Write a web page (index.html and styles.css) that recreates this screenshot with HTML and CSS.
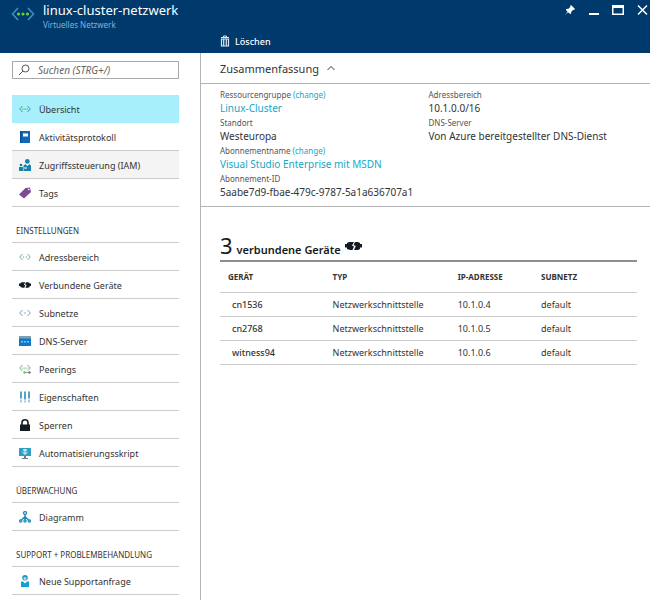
FILE: index.html
```html
<!DOCTYPE html>
<html lang="de">
<head>
  <meta charset="UTF-8">
  <title>linux-cluster-netzwerk - Virtuelles Netzwerk</title>
  <meta name="viewport" content="width=device-width, initial-scale=1.0">
  <link rel="stylesheet" href="styles.css">
</head>
<body>
  <header class="header">
    <div class="title">
      <svg class="title-icon" viewBox="0 0 24 14">
        <path d="M7 1L1.500 7L7 13M17 1L22.500 7L17 13" fill="none" stroke="#3a8fc4" stroke-width="1.600"/>
        <g fill="#6fd02c"><circle cx="7.500" cy="7" r="1.600"/><circle cx="12" cy="7" r="1.600"/><circle cx="16.500" cy="7" r="1.600"/></g>
      </svg>
      <div>
        <h1>linux-cluster-netzwerk</h1>
        <p>Virtuelles Netzwerk</p>
      </div>
    </div>
    <div class="window-buttons">
      <button type="button" aria-label="Anheften"><svg viewBox="0 0 12 12"><path d="M7 1L11 5L10 6L9.300 5.700L7.300 7.700L7 10L5.500 9.500L4 8.200L1 11L3.500 7.700L2 6L2 5L4.500 4.800L6.500 2.800L6 2Z" fill="#fff"/></svg></button>
      <button type="button" aria-label="Minimieren"><svg viewBox="0 0 12 12"><path d="M1 9h10v2H1z" fill="#fff"/></svg></button>
      <button type="button" aria-label="Maximieren"><svg viewBox="0 0 12 12"><path d="M0 1h12v10H0zM1.500 4v5.500h9V4z" fill="#fff" fill-rule="evenodd"/></svg></button>
      <button type="button" aria-label="Schließen"><svg viewBox="0 0 12 12"><path d="M2 1.500L11 10.500M11 1.500L2 10.500" stroke="#fff" stroke-width="1.500"/></svg></button>
    </div>
    <div class="toolbar">
      <button type="button">
        <svg viewBox="0 0 10 12"><path d="M1 2.500h8M3.500 2V1h3v1" fill="none" stroke="#dce9f5"/><path d="M1.500 4h7v7h-7zM3.700 4v7M6.300 4v7" fill="none" stroke="#dce9f5" stroke-width="1.200"/></svg>
        Löschen
      </button>
    </div>
  </header>

  <div class="content">
    <aside class="sidebar">
      <div class="search">
        <svg viewBox="0 0 12 12"><circle cx="7.500" cy="4.500" r="3.500" fill="none" stroke="#555"/><path d="M5 7L1 11" stroke="#555"/></svg>
        <input type="text" placeholder="Suchen (STRG+/)" aria-label="Suchen">
      </div>
      <nav>
        <ul>
          <li><a href="#" class="active">
            <svg viewBox="0 0 12 12"><path d="M3.500 3L.7 6L3.500 9M8.500 3L11.300 6L8.500 9" fill="none" stroke="#2f9fc4"/><path d="M3.200 5.500h1.300v1.200H3.200zM5.400 5.500h1.300v1.200H5.400zM7.500 5.500h1.300v1.200H7.500z" fill="#5fbf2a"/></svg>
            Übersicht</a></li>
          <li><a href="#">
            <svg viewBox="0 0 12 12"><path d="M1 0h10v12H1z" fill="#1068b8"/><path d="M1 0h1.500v12H1z" fill="#0a4f96"/><path d="M4 2.500h5v3H4z" fill="#fff"/></svg>
            Aktivitätsprotokoll</a></li>
          <li><a href="#" class="hovered">
            <svg viewBox="0 0 12 12"><g fill="#1483ad"><circle cx="8.300" cy="2.400" r="2.400"/><path d="M4.500 12V6.500l1.800-1.300L8.300 7l2-1.800L12 6.500V12z"/><circle cx="2" cy="6" r="1.300"/><path d="M0 8h4v4H0z"/></g><path d="M5 8.500h3v1H5z" fill="#fff"/></svg>
            Zugriffssteuerung (IAM)</a></li>
          <li><a href="#">
            <svg viewBox="0 0 12 12"><path d="M6.500 1L11 .5L12 5L5 11.500L0 7.500Z" fill="#804998"/><circle cx="9.800" cy="2.400" r=".8" fill="#fff"/></svg>
            Tags</a></li>
        </ul>
        <h2>EINSTELLUNGEN</h2>
        <ul>
          <li><a href="#">
            <svg viewBox="0 0 12 12"><path d="M3.500 3L.7 6L3.500 9M8.500 3L11.300 6L8.500 9" fill="none" stroke="#6fa8c8"/><path d="M3.800 5.500h1.400v1.200H3.800zM6.800 5.500h1.400v1.200H6.800z" fill="#7cc546"/></svg>
            Adressbereich</a></li>
          <li><a href="#">
            <svg viewBox="0 1 17 10"><use href="#plug"/></svg>
            Verbundene Geräte</a></li>
          <li><a href="#">
            <svg viewBox="0 0 12 12"><path d="M3.500 3L.7 6L3.500 9M8.500 3L11.300 6L8.500 9" fill="none" stroke="#6fa8c8"/><path d="M5.300 5.500h1.400v1.200H5.300z" fill="#6fbf3a"/></svg>
            Subnetze</a></li>
          <li><a href="#">
            <svg viewBox="0 0 12 12"><path d="M0 1h12v10H0z" fill="#1178c8"/><path d="M0 1h12v2.500H0z" fill="#7f9fb5"/><path d="M2 6h2v1.500H2zM5 6h2v1.500H5zM8 6h2v1.500H8z" fill="#79c8f4"/></svg>
            DNS-Server</a></li>
          <li><a href="#">
            <svg viewBox="0 0 12 12"><path d="M3.500 2L.7 5L3.500 8M8.500 2L11.300 5L9 7.500" fill="none" stroke="#6f9fb5"/><path d="M3.300 4.500h1.200v1.200H3.300zM5.400 4.500h1.200v1.200H5.400zM7.500 4.500h1.200v1.200H7.500z" fill="#7cc546"/><path d="M5 9.500h6" stroke="#86a986" fill="none"/><circle cx="5.500" cy="9.500" r="1.200" fill="#86b96a"/><circle cx="10.500" cy="9.500" r="1.200" fill="#777"/></svg>
            Peerings</a></li>
          <li><a href="#">
            <svg viewBox="0 0 12 12"><path d="M2 .5v7M6 .5v8M10 .5v7" stroke="#4fa5c6" stroke-width="2"/><path d="M2 8.500v3M6 9.500v2M10 8.500v3" stroke="#a5cddd" stroke-width="2"/></svg>
            Eigenschaften</a></li>
          <li><a href="#">
            <svg viewBox="0 0 12 12"><path d="M1 5.500h10V12H1z" fill="#151b22"/><path d="M3 6V3.500a3 2.700 0 0 1 6 0V6" fill="none" stroke="#151b22" stroke-width="1.600"/></svg>
            Sperren</a></li>
          <li><a href="#">
            <svg viewBox="0 0 12 12"><path d="M0 1h12v8H0z" fill="#2f9fc4"/><path d="M3 11h6v1H3zM5 9h2v2H5z" fill="#6b8290"/><path d="M6 2v5M3.500 5L6 7.300L8.500 5M4 3h4" fill="none" stroke="#fff"/></svg>
            Automatisierungsskript</a></li>
        </ul>
        <h2>ÜBERWACHUNG</h2>
        <ul>
          <li><a href="#">
            <svg viewBox="0 0 12 12"><path d="M6 3v6M6 5.500L2 9.500M6 5.500L10 9.500" fill="none" stroke="#2486b5" stroke-width="1.300"/><g fill="#fff" stroke="#1c8dc0" stroke-width="1.300"><circle cx="6" cy="2" r="1.500"/><circle cx="1.700" cy="10" r="1.100"/><circle cx="6" cy="10" r="1.100"/><circle cx="10.300" cy="10" r="1.100"/></g></svg>
            Diagramm</a></li>
        </ul>
        <h2>SUPPORT + PROBLEMBEHANDLUNG</h2>
        <ul>
          <li><a href="#">
            <svg viewBox="0 0 12 12"><circle cx="6" cy="2.800" r="2.800" fill="#2699bd"/><circle cx="6" cy="3.400" r="1.500" fill="#b5dbe8"/><path d="M2 12V6.500h2L6 8.500l2-2h2V12z" fill="#12a0d0"/></svg>
            Neue Supportanfrage</a></li>
        </ul>
      </nav>
    </aside>

    <main class="main">
      <button type="button" class="summary-toggle">
        Zusammenfassung
        <svg viewBox="0 0 8 6"><path d="M.5 5L4 1.500L7.500 5" fill="none" stroke="#333"/></svg>
      </button>
      <section class="summary">
        <dl>
          <dt>Ressourcengruppe <a href="#">(change)</a></dt>
          <dd><a href="#">Linux-Cluster</a></dd>
          <dt>Standort</dt>
          <dd>Westeuropa</dd>
          <dt>Abonnementname <a href="#">(change)</a></dt>
          <dd><a href="#">Visual Studio Enterprise mit MSDN</a></dd>
          <dt>Abonnement-ID</dt>
          <dd>5aabe7d9-fbae-479c-9787-5a1a636707a1</dd>
        </dl>
        <dl>
          <dt>Adressbereich</dt>
          <dd>10.1.0.0/16</dd>
          <dt>DNS-Server</dt>
          <dd>Von Azure bereitgestellter DNS-Dienst</dd>
        </dl>
      </section>

      <section class="devices">
        <h2>
          <span class="count">3</span>
          verbundene Geräte
          <svg viewBox="0 0 17 14">
            <g id="plug" fill="#151b22"><path d="M0 4h2V3l2-1h5L7 5.500l2 1L7.500 10H5L2 9V7.500H0z"/><path d="M10 2h3l2 1v1h2v3.500h-2V9l-2 1H9L10.800 6L8.500 5z"/></g>
          </svg>
        </h2>
        <table>
          <thead>
            <tr><th class="col-device">GERÄT</th><th class="col-type">TYP</th><th class="col-ip">IP-ADRESSE</th><th>SUBNETZ</th></tr>
          </thead>
          <tbody>
            <tr><td>cn1536</td><td>Netzwerkschnittstelle</td><td>10.1.0.4</td><td>default</td></tr>
            <tr><td>cn2768</td><td>Netzwerkschnittstelle</td><td>10.1.0.5</td><td>default</td></tr>
            <tr><td>witness94</td><td>Netzwerkschnittstelle</td><td>10.1.0.6</td><td>default</td></tr>
          </tbody>
        </table>
      </section>
    </main>
  </div>
</body>
</html>
```
FILE: styles.css
```css
* {
  box-sizing: border-box;
}
body {
  margin: 0;
  min-height: 100vh;
  display: flex;
  flex-direction: column;
  font-family: "Noto Sans", "Open Sans", sans-serif;
  font-size: 9px;
  color: #333;
  background: #fff;
}
h1, h2, p, ul, dl, dd {
  margin: 0;
  padding: 0;
}
ul {
  list-style: none;
}
a {
  color: #12a8c8;
  text-decoration: none;
}
button {
  font: inherit;
  color: inherit;
  background: none;
  border: none;
  padding: 0;
  cursor: pointer;
}
svg {
  display: block;
  flex: none;
}

/* Header */
.header {
  display: grid;
  grid-template-columns: 1fr auto;
  grid-template-rows: 31px 22px;
  background: #003a6c;
  color: #fff;
}
.title {
  display: flex;
  gap: 8px;
  padding-left: 11px;
}
.title-icon {
  width: 24px;
  height: 14px;
  margin-top: 7px;
}
.title h1 {
  font-size: 13px;
  line-height: 20px;
  font-weight: 400;
}
.title p {
  font-size: 8px;
  line-height: 10px;
  color: #7fb4dc;
}
.window-buttons {
  display: flex;
  gap: 12px;
  padding: 4px 2px 0 0;
  align-items: flex-start;
}
.window-buttons svg {
  width: 12px;
  height: 12px;
}
.toolbar {
  grid-column: 1 / 3;
  padding-left: 220px;
}
.toolbar button {
  display: flex;
  align-items: center;
  gap: 5px;
  height: 20px;
  font-weight: 500;
}
.toolbar svg {
  width: 10px;
  height: 12px;
}

.content {
  flex: 1;
  display: flex;
}

/* Sidebar */
.sidebar {
  width: 201px;
  flex: none;
  padding: 8px 21px 5px 12px;
  border-right: 1px solid #b4b4b4;
}
.search {
  display: flex;
  align-items: center;
  height: 18px;
  margin-bottom: 16px;
  border: 1px solid #a9a9a9;
  padding-left: 5px;
}
.search svg {
  width: 12px;
  height: 12px;
}
.search input {
  flex: 1;
  min-width: 0;
  border: none;
  outline: none;
  padding: 0 8px;
  font: italic 10px "Noto Sans", "Open Sans", sans-serif;
}
.search input::placeholder {
  color: #666;
}
.sidebar li a {
  display: flex;
  align-items: center;
  gap: 8px;
  height: 28px;
  padding: 1px 0 0 7px;
  border-bottom: 1px solid #ccc;
  color: #333;
}
.sidebar li svg {
  width: 12px;
  height: 12px;
}
.sidebar li a.active {
  background: #a6effb;
  border-bottom-color: #a6effb;
}
.sidebar li a.hovered {
  background: #f4f4f4;
}
.sidebar h2 {
  height: 36px;
  padding: 12px 4px 0;
  border-bottom: 1px solid #ccc;
  font-size: 8px;
  line-height: 24px;
  font-weight: 400;
}

/* Summary */
.main {
  flex: 1;
  min-width: 0;
}
.summary-toggle {
  display: flex;
  align-items: center;
  gap: 8px;
  width: 100%;
  height: 31px;
  padding-left: 19px;
  border-bottom: 1px solid #b4b4b4;
  font-size: 11px;
}
.summary-toggle svg {
  width: 8px;
  height: 6px;
}
.summary {
  display: grid;
  grid-template-columns: 1fr 1fr;
  padding: 5px 13px 5px 19px;
  border-bottom: 1px solid #b4b4b4;
}
.summary dt {
  font-size: 8px;
  line-height: 12px;
  color: #555;
}
.summary dd {
  font-size: 10px;
  line-height: 14px;
  padding-bottom: 2px;
}

/* Devices */
.devices {
  padding: 24px 13px 0 19px;
}
.devices h2 {
  display: flex;
  gap: 4px;
  align-items: baseline;
  height: 31px;
  border-bottom: 2px solid #8a8f94;
  font-size: 11px;
  line-height: 28px;
  font-weight: 600;
  color: #151b22;
}
.devices .count {
  font-size: 22px;
  font-weight: 400;
}
.devices h2 svg {
  width: 17px;
  height: 14px;
}
table {
  width: 100%;
  border-collapse: collapse;
  table-layout: fixed;
}
th, td {
  height: 24px;
  padding: 0;
  border-bottom: 1px solid #ccc;
  text-align: left;
}
th {
  height: 30px;
  font-size: 8px;
  font-weight: 700;
}
th:first-child {
  padding-left: 8px;
}
td:first-child {
  padding-left: 12px;
  font-weight: 500;
}
.col-device {
  width: 27%;
}
.col-type {
  width: 30%;
}
.col-ip {
  width: 20%;
}
```
